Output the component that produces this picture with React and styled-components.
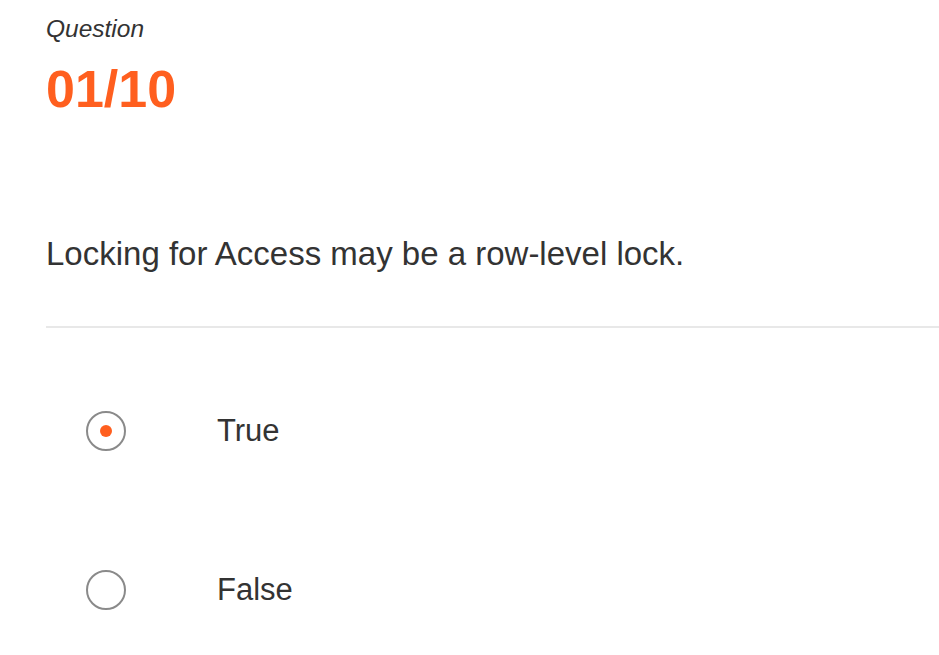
import React, { useState } from "react";
import styled, { createGlobalStyle } from "styled-components";

const GlobalStyle = createGlobalStyle`
  html, body {
    margin: 0;
    padding: 0;
    background: #ffffff;
  }
  body {
    font-family: "Liberation Sans", Arial, sans-serif;
    color: #333333;
  }
`;

const QuizWrapper = styled.div`
  width: 939px;
  height: 655px;
  padding-left: 46px;
  box-sizing: border-box;
  display: flex;
  flex-direction: column;
  overflow: hidden;
`;

const Label = styled.div`
  margin-top: 15px;
  font-size: 24.5px;
  line-height: 28px;
  font-style: italic;
  color: #333333;
`;

const Counter = styled.div`
  margin-top: 18px;
  font-size: 52px;
  line-height: 56px;
  font-weight: 700;
  color: #ff5f1f;
`;

const QuestionText = styled.p`
  margin: 117px 0 0;
  font-size: 33px;
  line-height: 40px;
  color: #333333;
`;

const Divider = styled.hr`
  margin: 52px 0 0;
  border: none;
  height: 2px;
  background: #e8e8e8;
`;

const OptionList = styled.div`
  display: flex;
  flex-direction: column;
  gap: 119px;
  margin-top: 83px;
`;

const Option = styled.label`
  display: flex;
  align-items: center;
  height: 40px;
  cursor: pointer;
`;

const RadioCircle = styled.span`
  width: 36px;
  height: 36px;
  margin-left: 40px;
  border: 2px solid #8a8a8a;
  border-radius: 50%;
  display: flex;
  align-items: center;
  justify-content: center;
  flex-shrink: 0;

  &::after {
    content: "";
    width: 12px;
    height: 12px;
    border-radius: 50%;
    background: ${(p) => (p.$checked ? "#ff5f1f" : "transparent")};
  }
`;

const OptionText = styled.span`
  margin-left: 91px;
  font-size: 31px;
  color: #333333;
`;

export default function App() {
  const [selected, setSelected] = useState("True");
  const options = ["True", "False"];

  return (
    <>
      <GlobalStyle />
      <QuizWrapper>
        <Label>Question</Label>
        <Counter>01/10</Counter>
        <QuestionText>Locking for Access may be a row-level lock.</QuestionText>
        <Divider />
        <OptionList>
          {options.map((opt) => (
            <Option key={opt} onClick={() => setSelected(opt)}>
              <RadioCircle $checked={selected === opt} />
              <OptionText>{opt}</OptionText>
            </Option>
          ))}
        </OptionList>
      </QuizWrapper>
    </>
  );
}
